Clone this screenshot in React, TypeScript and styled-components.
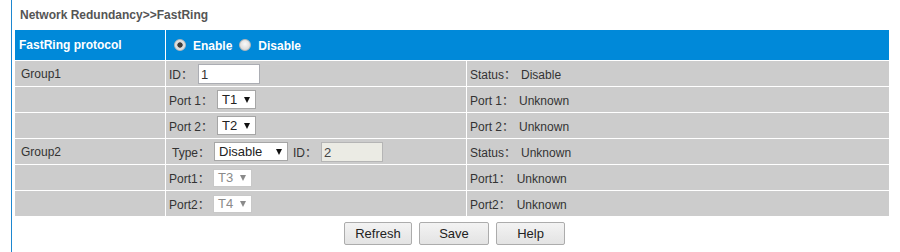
import React from 'react';
import styled, { createGlobalStyle } from 'styled-components';

const GlobalStyle = createGlobalStyle`
  body {
    margin: 0;
    background: #fff;
    font-family: "Liberation Sans", Arial, "Noto Sans CJK SC", sans-serif;
    font-size: 12px;
    color: #333;
  }
`;

const Page = styled.div`
  margin-left: 11px;
  border-left: 1px solid #1e87d0;
  min-height: 252px;
  box-sizing: border-box;
`;

const Title = styled.div`
  height: 29px;
  line-height: 30px;
  padding-left: 8px;
  font-weight: bold;
  color: #555;
`;

const Table = styled.table`
  margin-left: 2px;
  width: 876px;
  table-layout: fixed;
  border-collapse: separate;
  border-spacing: 1px;
`;

const Row = styled.tr<{ $head?: boolean }>`
  height: ${(p) => (p.$head ? '30px' : '25px')};
  background: ${(p) => (p.$head ? '#0089d9' : '#cccccc')};
  color: ${(p) => (p.$head ? '#fff' : '#333')};
  font-weight: ${(p) => (p.$head ? 'bold' : 'normal')};
`;

const Cell = styled.td<{ $pad?: number }>`
  padding: 0 0 0 ${(p) => p.$pad ?? 3}px;
  vertical-align: middle;
  white-space: nowrap;
`;

const Inline = styled.div`
  display: flex;
  align-items: center;
`;

const Label = styled.span<{ $w?: number }>`
  display: inline-block;
  width: ${(p) => (p.$w ? `${p.$w}px` : 'auto')};
`;

const Value = styled.span<{ $gap: number }>`
  margin-left: ${(p) => p.$gap}px;
`;

const Radio = styled.input.attrs({ type: 'radio' })`
  appearance: none;
  margin: 0 7px 0 0;
  width: 12px;
  height: 12px;
  border-radius: 50%;
  border: 1px solid #b8b8b8;
  box-sizing: border-box;
  background: radial-gradient(circle at 50% 40%, #fafafa 0, #dcdcdc 70%, #cfcfcf 100%);
  &:checked {
    background: radial-gradient(circle, #3c3c3c 0 2.3px, #d8d8d8 3px, #f2f2f2 100%);
  }
`;

const RadioText = styled.span`
  margin-right: 7px;
  padding-top: 2px;
`;

const TextBox = styled.input<{ $w: number }>`
  width: ${(p) => p.$w}px;
  height: 20px;
  box-sizing: border-box;
  border: 1px solid #abadb3;
  padding: 1px 2px 0;
  font: 13px "Liberation Sans", Arial, sans-serif;
  color: #333;
  background: #fff;
  &:disabled {
    background: #ebebe4;
    border-color: #b5b5b5;
    color: #444;
  }
`;

const Drop = styled.span<{ $w: number; $off?: boolean }>`
  display: inline-flex;
  align-items: center;
  justify-content: space-between;
  width: ${(p) => p.$w}px;
  height: ${(p) => (p.$off ? 18 : 19)}px;
  box-sizing: border-box;
  padding: 0 5px 0 4px;
  border: 1px solid ${(p) => (p.$off ? '#c8c8c8' : '#a6a6a6')};
  background: #fff;
  font-size: 13px;
  color: ${(p) => (p.$off ? '#8a8a8a' : '#222')};
`;

const Arrow = styled.span<{ $off?: boolean }>`
  width: 0;
  height: 0;
  border-left: 3.5px solid transparent;
  border-right: 3.5px solid transparent;
  border-top: 6px solid ${(p) => (p.$off ? '#8a8a8a' : '#111')};
`;

const ButtonBar = styled.div`
  width: 876px;
  margin: 5px 0 0 2px;
  padding-left: 5px;
  box-sizing: border-box;
  display: flex;
  justify-content: center;
  gap: 7px;
`;

const Button = styled.button<{ $w: number }>`
  width: ${(p) => p.$w}px;
  height: 23px;
  border: 1px solid #acacac;
  border-radius: 2px;
  background: linear-gradient(#f3f3f3, #e3e3e3);
  font: 13px "Liberation Sans", Arial, sans-serif;
  color: #222;
  padding: 0;
`;

const Select = ({ value, w, off }: { value: string; w: number; off?: boolean }) => (
  <Drop $w={w} $off={off}>
    {value}
    <Arrow $off={off} />
  </Drop>
);

const App = () => {
  return (
    <Page>
      <GlobalStyle />
      <Title>Network Redundancy&gt;&gt;FastRing</Title>
      <Table>
        <colgroup>
          <col style={{ width: 150 }} />
          <col style={{ width: 300 }} />
          <col style={{ width: 422 }} />
        </colgroup>
        <tbody>
          <Row $head>
            <Cell $pad={4}>FastRing protocol</Cell>
            <Cell $pad={8} colSpan={2}>
              <Inline>
                <Radio name="fr" defaultChecked />
                <RadioText>Enable</RadioText>
                <Radio name="fr" />
                <RadioText>Disable</RadioText>
              </Inline>
            </Cell>
          </Row>
          <Row>
            <Cell $pad={6}>Group1</Cell>
            <Cell>
              <Inline>
                <Label $w={29}>ID：</Label>
                <TextBox $w={62} defaultValue="1" />
              </Inline>
            </Cell>
            <Cell>Status：<Value $gap={5}>Disable</Value></Cell>
          </Row>
          <Row>
            <Cell />
            <Cell>
              <Inline>
                <Label $w={48}>Port 1：</Label>
                <Select value="T1" w={39} />
              </Inline>
            </Cell>
            <Cell>Port 1：<Value $gap={5}>Unknown</Value></Cell>
          </Row>
          <Row>
            <Cell />
            <Cell>
              <Inline>
                <Label $w={48}>Port 2：</Label>
                <Select value="T2" w={39} />
              </Inline>
            </Cell>
            <Cell>Port 2：<Value $gap={5}>Unknown</Value></Cell>
          </Row>
          <Row>
            <Cell $pad={6}>Group2</Cell>
            <Cell $pad={6}>
              <Inline>
                <Label $w={42}>Type：</Label>
                <Select value="Disable" w={74} />
                <Label $w={28} style={{ marginLeft: 5 }}>ID：</Label>
                <TextBox $w={62} defaultValue="2" disabled />
              </Inline>
            </Cell>
            <Cell>Status：<Value $gap={5}>Unknown</Value></Cell>
          </Row>
          <Row>
            <Cell />
            <Cell>
              <Inline>
                <Label $w={44}>Port1：</Label>
                <Select value="T3" w={39} off />
              </Inline>
            </Cell>
            <Cell>Port1：<Value $gap={6}>Unknown</Value></Cell>
          </Row>
          <Row>
            <Cell />
            <Cell>
              <Inline>
                <Label $w={44}>Port2：</Label>
                <Select value="T4" w={39} off />
              </Inline>
            </Cell>
            <Cell>Port2：<Value $gap={6}>Unknown</Value></Cell>
          </Row>
        </tbody>
      </Table>
      <ButtonBar>
        <Button $w={68}>Refresh</Button>
        <Button $w={70}>Save</Button>
        <Button $w={69}>Help</Button>
      </ButtonBar>
    </Page>
  );
};

export default App;
